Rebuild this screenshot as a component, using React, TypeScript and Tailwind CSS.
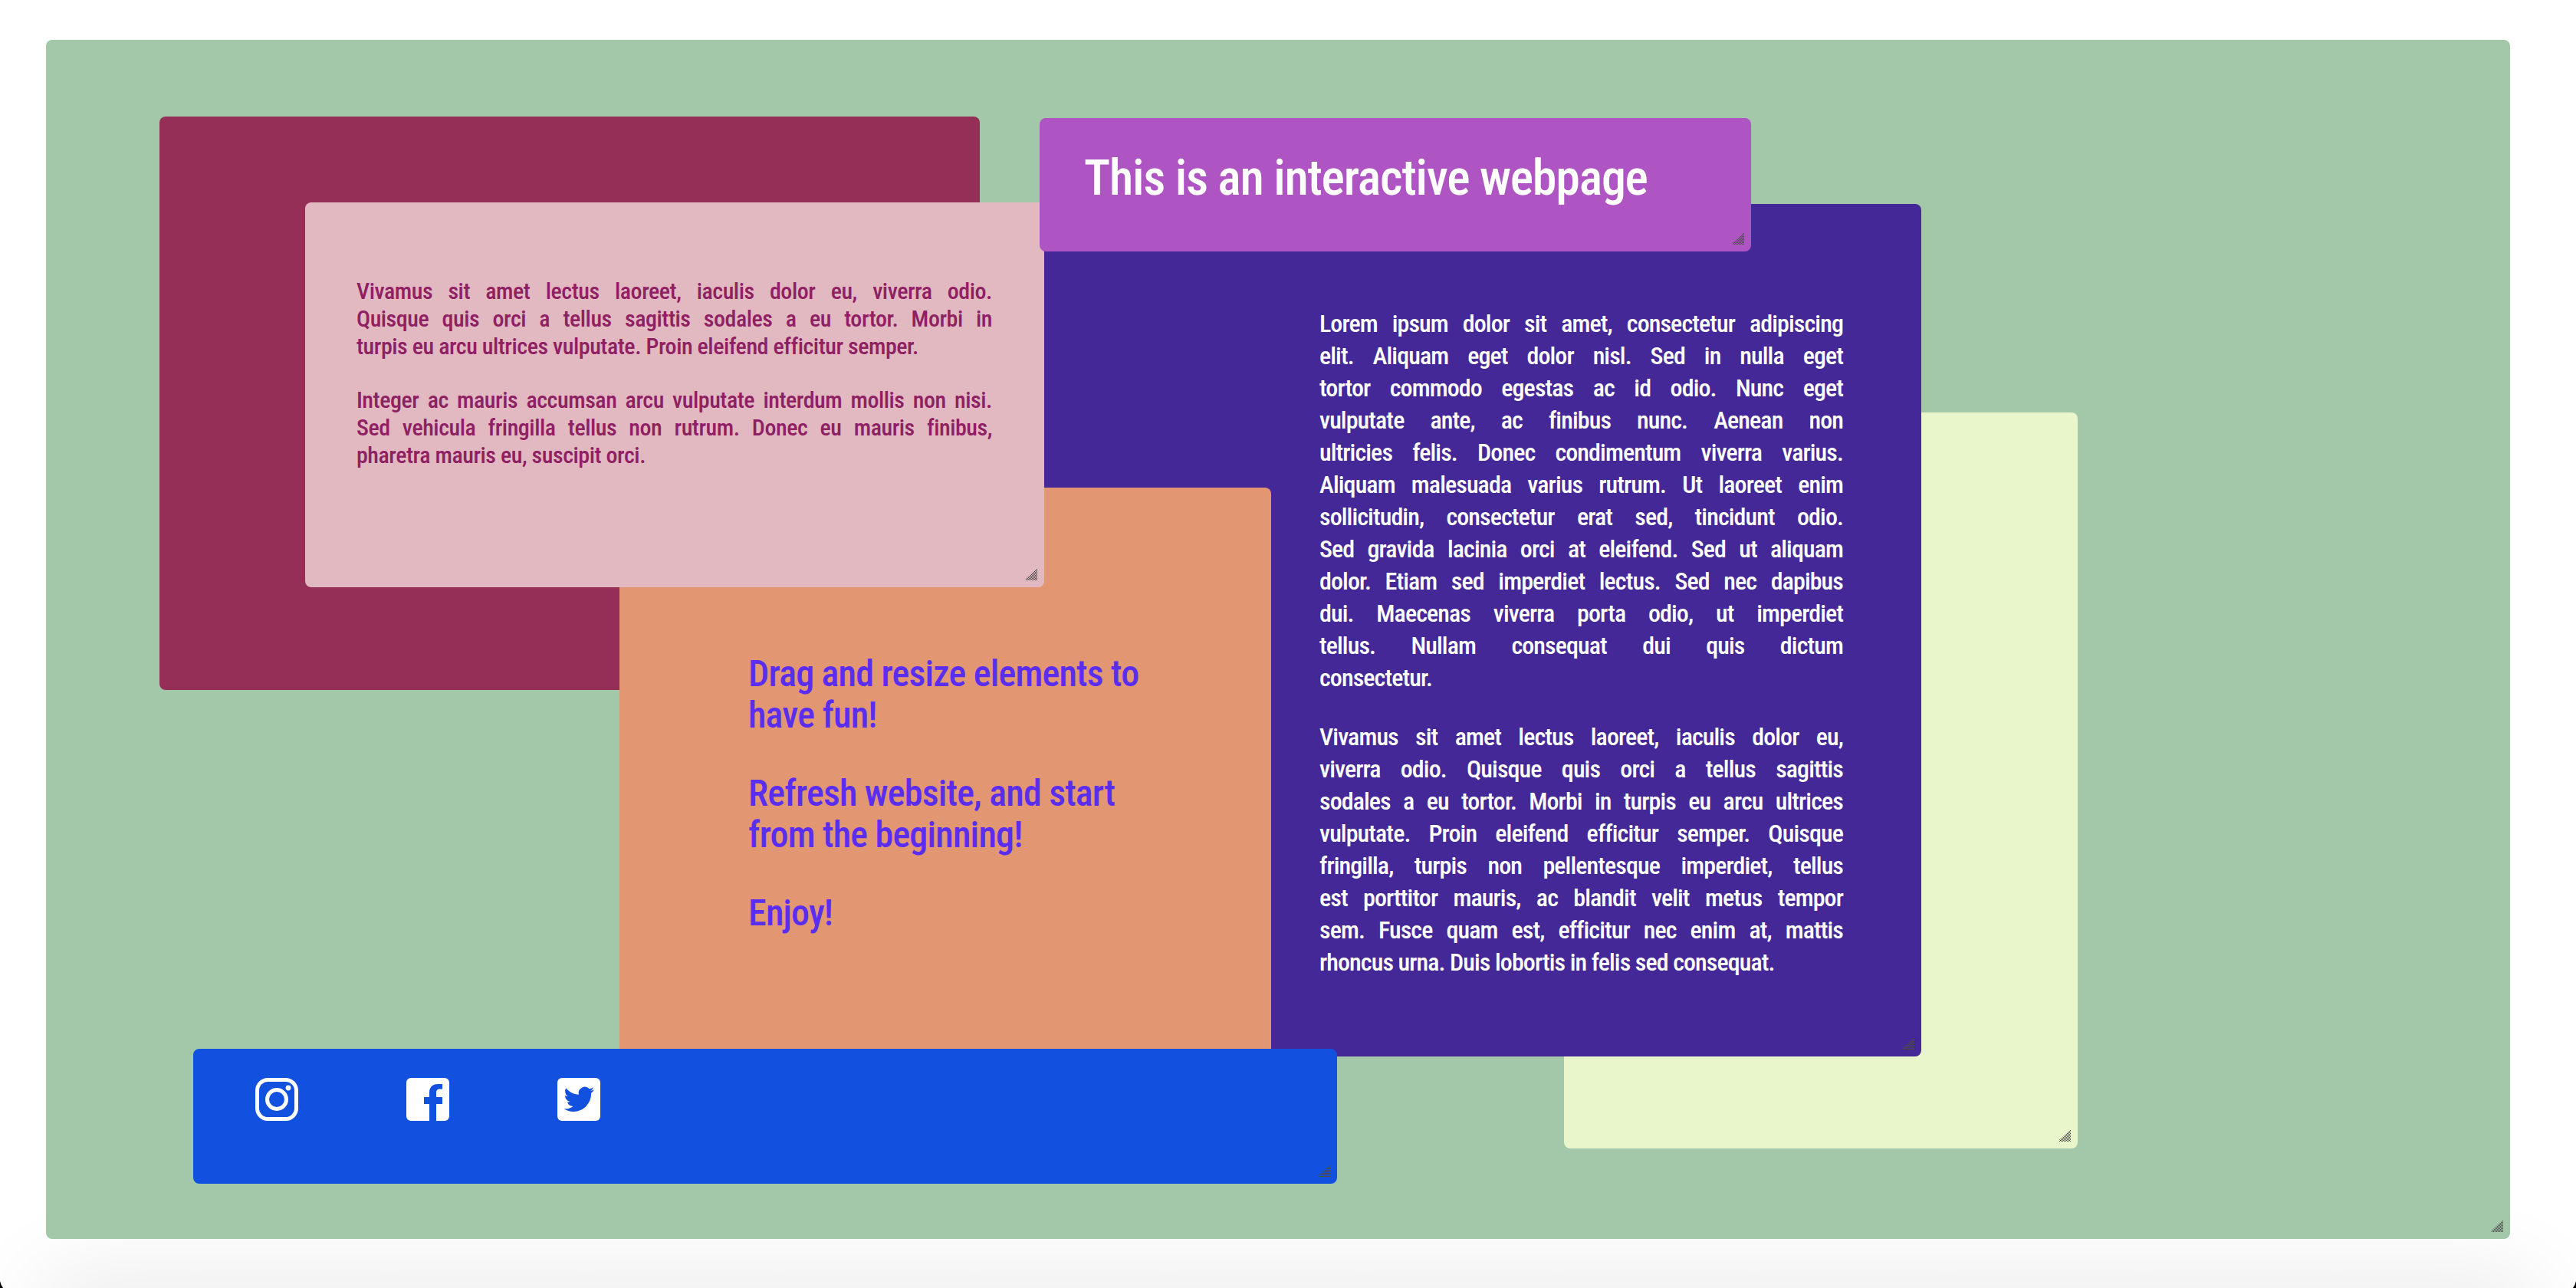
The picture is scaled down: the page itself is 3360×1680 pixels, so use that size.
import React from 'react';

const FONT = 'font-["Ubuntu_Condensed","Roboto_Condensed","Liberation_Sans_Narrow","Noto_Sans",sans-serif]';

const Grip = () => (
  <svg className="absolute bottom-[9px] right-[9px]" width="16" height="16" viewBox="0 0 16 16">
    <defs>
      <pattern id="hatch" width="2" height="2" patternUnits="userSpaceOnUse">
        <rect width="1" height="1" fill="#4a4a4a" />
        <rect x="1" y="1" width="1" height="1" fill="#4a4a4a" />
      </pattern>
    </defs>
    <path d="M16 0V16H2Q0 16 1 14Z" fill="url(#hatch)" />
  </svg>
);

// each line is set on its own so the breaks stay put, last one left aligned
const Para = ({ lines, className = '' }: { lines: string[]; className?: string }) => (
  <div className={className}>
    {lines.map((line, i) => (
      <div
        key={i}
        className={i === lines.length - 1 ? 'whitespace-nowrap' : 'whitespace-nowrap text-justify [text-align-last:justify]'}
      >
        {line}
      </div>
    ))}
  </div>
);

const lorem = [
  'Lorem ipsum dolor sit amet, consectetur adipiscing',
  'elit. Aliquam eget dolor nisl. Sed in nulla eget',
  'tortor commodo egestas ac id odio. Nunc eget',
  'vulputate ante, ac finibus nunc. Aenean non',
  'ultricies felis. Donec condimentum viverra varius.',
  'Aliquam malesuada varius rutrum. Ut laoreet enim',
  'sollicitudin, consectetur erat sed, tincidunt odio.',
  'Sed gravida lacinia orci at eleifend. Sed ut aliquam',
  'dolor. Etiam sed imperdiet lectus. Sed nec dapibus',
  'dui. Maecenas viverra porta odio, ut imperdiet',
  'tellus. Nullam consequat dui quis dictum',
  'consectetur.',
];
const vivamus = [
  'Vivamus sit amet lectus laoreet, iaculis dolor eu,',
  'viverra odio. Quisque quis orci a tellus sagittis',
  'sodales a eu tortor. Morbi in turpis eu arcu ultrices',
  'vulputate. Proin eleifend efficitur semper. Quisque',
  'fringilla, turpis non pellentesque imperdiet, tellus',
  'est porttitor mauris, ac blandit velit metus tempor',
  'sem. Fusce quam est, efficitur nec enim at, mattis',
  'rhoncus urna. Duis lobortis in felis sed consequat.',
];
const pinkOne = [
  'Vivamus sit amet lectus laoreet, iaculis dolor eu, viverra odio.',
  'Quisque quis orci a tellus sagittis sodales a eu tortor. Morbi in',
  'turpis eu arcu ultrices vulputate. Proin eleifend efficitur semper.',
];
const pinkTwo = [
  'Integer ac mauris accumsan arcu vulputate interdum mollis non nisi.',
  'Sed vehicula fringilla tellus non rutrum. Donec eu mauris finibus,',
  'pharetra mauris eu, suscipit orci.',
];

export default function App() {
  return (
    <div className={`relative h-[1680px] w-[3360px] overflow-hidden bg-white pl-[60px] pt-[52px] ${FONT}`}>
      {/* window shadow coming up from below the fold */}
      <div className="absolute left-[50px] top-[1680px] h-[60px] w-[3260px] rounded-[40px] shadow-[0_0_120px_rgba(0,0,0,0.14)]" />
      <svg className="absolute bottom-0 left-0" width="5" height="9" viewBox="0 0 5 9">
        <path d="M0 0V9H4Q1 5 0 0Z" fill="#000" />
      </svg>
      <svg className="absolute bottom-0 right-0" width="5" height="9" viewBox="0 0 5 9">
        <path d="M5 0V9H1Q4 5 5 0Z" fill="#000" />
      </svg>

      <div className="relative h-[1564px] w-[3214px] rounded-lg bg-[#a2c8a9]">
        <Grip />
        {/* maroon */}
        <div className="absolute left-[148px] top-[100px] h-[748px] w-[1070px] rounded-lg bg-[#962f57]" />
        {/* cream */}
        <div className="absolute left-[1980px] top-[486px] h-[960px] w-[670px] rounded-lg bg-[#e9f5cb]">
          <Grip />
        </div>
        {/* indigo */}
        <div className="absolute left-[1000px] top-[214px] h-[1112px] w-[1446px] rounded-lg bg-[#452897] pl-[661px] pr-[102px] pt-[135px] text-[32px] font-medium leading-[42px] tracking-[-0.9px] text-white">
          <Para lines={lorem} className="mb-[35px]" />
          <Para lines={vivamus} />
          <Grip />
        </div>
        {/* orange */}
        <div className="absolute left-[748px] top-[584px] h-[800px] w-[850px] rounded-lg bg-[#e29672] pl-[168px] pr-[150px] pt-[216px] text-[48px] font-medium leading-[54px] tracking-[-0.8px] text-[#5a2ef0]">
          <p className="mb-[48px]">Drag and resize elements to have fun!</p>
          <p className="mb-[48px]">Refresh website, and start from the beginning!</p>
          <p>Enjoy!</p>
        </div>
        {/* pink */}
        <div className="absolute left-[338px] top-[212px] h-[502px] w-[964px] rounded-lg bg-[#e2b8c1] pl-[67px] pr-[68px] pt-[98px] text-[30px] font-medium leading-[36px] tracking-[-0.45px] text-[#8f2063]">
          <Para lines={pinkOne} className="mb-[34px]" />
          <Para lines={pinkTwo} />
          <Grip />
        </div>
        {/* purple title */}
        <div className="absolute left-[1296px] top-[102px] h-[174px] w-[928px] rounded-lg bg-[#ae55c3] pl-[58px] pt-[40px] text-[64px] font-medium leading-[78px] tracking-[-1.2px] text-white">
          <h1>This is an interactive webpage</h1>
          <Grip />
        </div>
        {/* blue */}
        <div className="absolute left-[192px] top-[1316px] flex h-[176px] w-[1492px] items-start gap-[141px] rounded-lg bg-[#1250e0] pl-[81px] pt-[38px]">
          <svg width="56" height="56" viewBox="0 0 56 56" fill="none" stroke="#fff">
            <rect x="2.5" y="2.5" width="51" height="51" rx="14" strokeWidth="5" />
            <circle cx="28" cy="28" r="12.5" strokeWidth="5" />
            <circle cx="43" cy="13" r="3.4" fill="#fff" stroke="none" />
          </svg>
          <svg width="56" height="56" viewBox="0 0 56 56">
            <path fill="#fff" d="M6 0H50a6 6 0 0 1 6 6V50a6 6 0 0 1-6 6H39V34H47V25H39V19c0-3 1.500-4.500 4-4.500H47V8H41c-7 0-11 4.500-11 11V25H23V34H30V56H6a6 6 0 0 1-6-6V6a6 6 0 0 1 6-6Z" />
          </svg>
          <svg width="56" height="56" viewBox="0 0 56 56">
            <rect width="56" height="56" rx="6" fill="#fff" />
            <g transform="translate(8.500 8) scale(1.65)">
              <path fill="#1250e0" d="M23.953 4.57a10 10 0 01-2.825.775 4.958 4.958 0 002.163-2.723c-.951.555-2.005.959-3.127 1.184a4.92 4.92 0 00-8.384 4.482C7.69 8.095 4.067 6.13 1.64 3.162a4.822 4.822 0 00-.666 2.475c0 1.71.87 3.213 2.188 4.096a4.904 4.904 0 01-2.228-.616v.06a4.923 4.923 0 003.946 4.827 4.996 4.996 0 01-2.212.085 4.936 4.936 0 004.604 3.417 9.867 9.867 0 01-6.102 2.105c-.39 0-.779-.023-1.17-.067a13.995 13.995 0 007.557 2.209c9.053 0 13.998-7.496 13.998-13.985 0-.21 0-.42-.015-.63A9.935 9.935 0 0024 4.59z" />
            </g>
          </svg>
          <Grip />
        </div>
      </div>
    </div>
  );
}
